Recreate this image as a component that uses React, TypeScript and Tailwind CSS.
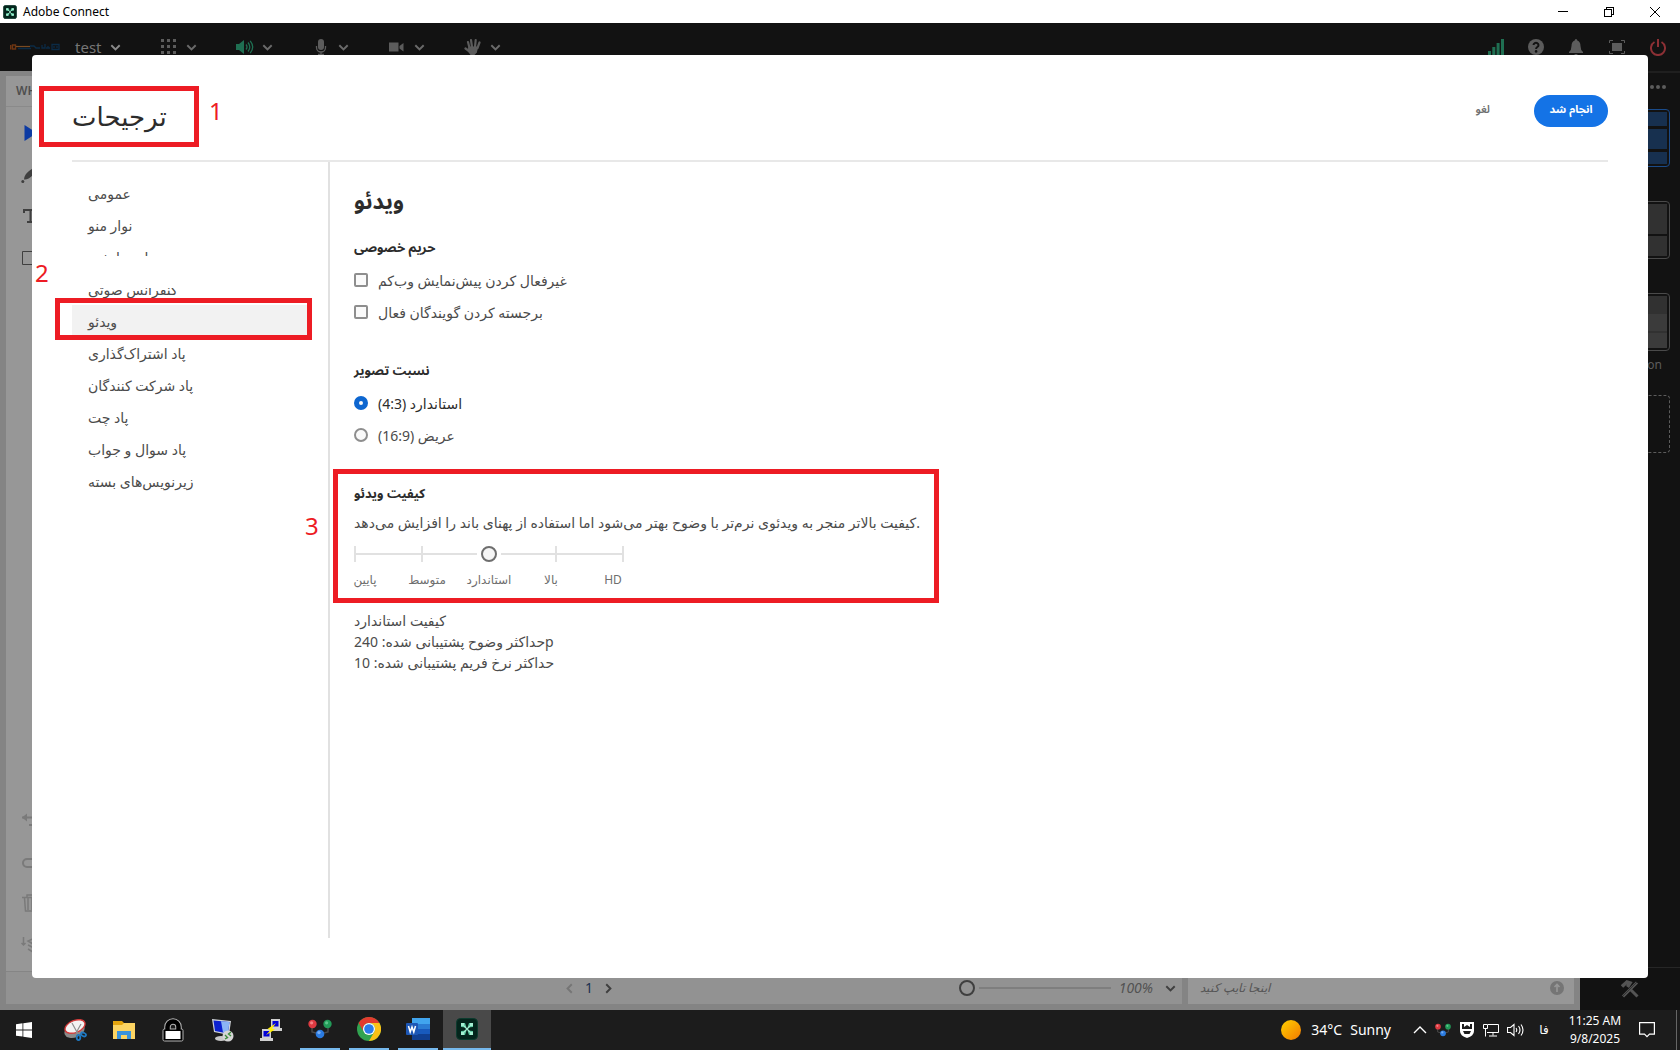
import type { ReactNode } from 'react';
import { clsx } from 'clsx';

const navItems = [
  'عمومی',
  'نوار منو',
  'نام نمایشی',
  'کنفرانس صوتی',
  'ویدئو',
  'پاد اشتراک‌گذاری',
  'پاد شرکت کنندگان',
  'پاد چت',
  'پاد سوال و جواب',
  'زیرنویس‌های بسته',
];

const Chevron = ({ className = '' }) => (
  <svg viewBox="0 0 12 8" className={clsx('h-[7px] w-[11px]', className)} fill="none" stroke="currentColor" strokeWidth="2.2">
    <path d="M1.2 1.4 6 6.2l4.8-4.8" />
  </svg>
);

const ConnectIcon = ({ className = '' }) => (
  <svg viewBox="0 0 22 22" className={className}>
    <rect x="0.5" y="0.5" width="21" height="21" rx="4" fill="#04251c" stroke="#0c3b2e" />
    <path d="M5 5h4l1.500 4.500L5 9zM17 5h-4l-1.500 4.500L17 9zM5 17h4l1.500-4.500L5 13zM17 17h-4l-1.500-4.500L17 13z" fill="#5fc9a2" />
    <path d="M5 5h3v3H5zM14 5h3v3h-3zM5 14h3v3H5zM14 14h3v3h-3z" fill="#a5f0d3" />
    <path d="m8 8 6 6M14 8l-6 6" stroke="#a5f0d3" strokeWidth="1.2" />
  </svg>
);

const Molecule = ({ className = '' }) => (
  <svg viewBox="0 0 24 20" className={className}>
    <path d="M4 8v5l8 2 8-2V8" fill="none" stroke="#4a4a4a" strokeWidth="1.4" />
    <circle cx="4.5" cy="5" r="4.2" fill="#dd3a41" />
    <circle cx="19.5" cy="5" r="4.2" fill="#229a58" />
    <circle cx="12" cy="15" r="4.3" fill="#2b7be0" />
    <circle cx="3.6" cy="3.8" r="1.6" fill="#f58084" />
    <circle cx="18.6" cy="3.8" r="1.6" fill="#5cc48a" />
    <circle cx="11" cy="13.6" r="1.7" fill="#76adf2" />
  </svg>
);

const TitleBar = () => (
  <div className="flex h-[23px] items-center bg-white pl-[3px] text-xs text-black">
    <ConnectIcon className="h-[14px] w-[14px]" />
    <span className="ml-[6px]">Adobe Connect</span>
    <div className="ml-auto flex items-center">
      <button aria-label="Minimize" className="flex h-5 w-[46px] items-center justify-center">
        <svg viewBox="0 0 10 10" className="h-[10px] w-[10px]" stroke="#000" shapeRendering="crispEdges">
          <path d="M0 4.5h10" />
        </svg>
      </button>
      <button aria-label="Restore" className="flex h-5 w-[46px] items-center justify-center">
        <svg viewBox="0 0 10 10" className="h-[10px] w-[10px]" fill="none" stroke="#000" shapeRendering="crispEdges">
          <path d="M.5 2.5h7v7h-7zM2.5 2V.5h7v7H8" />
        </svg>
      </button>
      <button aria-label="Close" className="mr-[2px] flex h-5 w-[46px] items-center justify-center">
        <svg viewBox="0 0 10 10" className="h-[10px] w-[10px]" stroke="#000">
          <path d="m0 0 10 10M10 0 0 10" />
        </svg>
      </button>
    </div>
  </div>
);

const ToolButton = ({ label, children }: { label: string; children: ReactNode }) => (
  <button aria-label={label} className="ml-10 flex items-center gap-[9px] text-[#5c5c5c]">
    <span className="flex w-4 justify-center">{children}</span>
    <Chevron className="text-[#6a6a6a]" />
  </button>
);

const MeetingBar = () => (
  <header className="flex h-12 items-center bg-[#121212] pr-[14px] pl-[10px]">
    <svg viewBox="0 0 50 8" className="h-2 w-[50px]" fill="none">
      <path d="M.7 2v4.500M2.500 2h3v4h-3z" stroke="#6e3512" strokeWidth="1.4" />
      <path d="M6 3.500h14" stroke="#7a4a20" strokeWidth="1.2" />
      <path d="M8 5.500h13M20 3h4l2 2h4M32 2v3h3V1m3 4V3m2 2h-4M42 1.500h7v5h-7zM44 3v2m3-2v2" stroke="#0b2b46" strokeWidth="1.300" />
    </svg>
    <button className="ml-[15px] flex items-center gap-[9px] text-[15px] text-[#767676]">
      test
      <Chevron className="text-[#8a8a8a]" />
    </button>
    <ToolButton label="Pods">
      <svg viewBox="0 0 16 16" className="h-4 w-4 shrink-0" fill="currentColor">
        {[0, 6, 12].map((y) => [0, 6, 12].map((x) => <rect key={`${x}-${y}`} x={x} y={y} width="3" height="3" />))}
      </svg>
    </ToolButton>
    <ToolButton label="Speaker">
      <svg viewBox="0 0 18 16" className="h-4 w-[18px] shrink-0" fill="none" stroke="#1f6f52" strokeWidth="1.3">
        <path d="M0 5h3l5-4v14l-5-4H0z" fill="#1f6f52" stroke="none" />
        <path d="M10 5.5q2 2.5 0 5M12 3.5q3.6 4.5 0 9M14.2 1.8q5 6.2 0 12.4" />
      </svg>
    </ToolButton>
    <ToolButton label="Microphone">
      <svg viewBox="0 0 12 16" className="h-4 w-3 shrink-0" fill="none" stroke="currentColor" strokeWidth="1.3">
        <rect x="3" y="0" width="6" height="11" rx="3" fill="currentColor" stroke="none" />
        <path d="M1.5 7v1.5a4.5 4.5 0 0 0 9 0V7M6 13v2.5M3 15.5h6" />
      </svg>
    </ToolButton>
    <ToolButton label="Camera">
      <svg viewBox="0 0 16 12" className="h-3 w-4 shrink-0" fill="currentColor">
        <path d="M0 1.5h9.5v9H0zM10.500 5l4-3v8.500l-4-3z" />
      </svg>
    </ToolButton>
    <ToolButton label="Raise hand">
      <svg viewBox="0 0 18 18" className="h-[18px] w-[18px] shrink-0" fill="none" stroke="currentColor" strokeWidth="2.2" strokeLinecap="round">
        <path d="M5.500 10 4 4M8 9 7 2M11 9l.7-7M13.500 10l2-5.500M5 13l-3.500-2.500" />
        <path d="M4.500 8.500h9.800l-1.500 6L10.500 17h-4l-3-4z" fill="currentColor" stroke="none" />
      </svg>
    </ToolButton>

    <div className="ml-auto flex items-center gap-6">
      <svg viewBox="0 0 16 16" className="h-4 w-4" fill="#1f6f52">
        <path d="M0 12h3v4H0zM4.300 8h3v8h-3zM8.600 4h3v12h-3zM13 0h3v16h-3z" />
      </svg>
      <button aria-label="Help">
        <svg viewBox="0 0 16 16" className="h-4 w-4">
          <circle cx="8" cy="8" r="8" fill="#5c5c5c" />
          <path d="M5.500 6a2.500 2.300 0 1 1 3.800 2Q8.100 8.800 8.100 10" fill="none" stroke="#121212" strokeWidth="2" />
          <circle cx="8.100" cy="12.400" r="1.300" fill="#121212" />
        </svg>
      </button>
      <button aria-label="Notifications">
        <svg viewBox="0 0 16 16" className="h-4 w-4" fill="#5c5c5c">
          <path d="M8 0q1.300 0 1.300 1.500Q12.500 2.500 12.500 7q0 4 2.500 6v1H1v-1q2.500-2 2.500-6 0-4.500 3.200-5.500Q6.700 0 8 0zM6 15h4q-2 2-4 0z" />
        </svg>
      </button>
      <button aria-label="Full screen">
        <svg viewBox="0 0 16 16" className="h-4 w-[18px]" fill="none" stroke="#5c5c5c">
          <path d="M.5 4V1.500H4M12 1.500h3.500V4M15.500 12v2.500H12M4 14.500H.5V12" />
          <path d="M3 4h10v8H3z" fill="#5c5c5c" stroke="none" />
        </svg>
      </button>
      <button aria-label="Leave meeting">
        <svg viewBox="0 0 16 17" className="h-[17px] w-4" fill="none" stroke="#8c3035" strokeWidth="2">
          <path d="M4.500 3a7 7 0 1 0 7 0M8 0v8" />
        </svg>
      </button>
    </div>
  </header>
);

const DrawingTools = () => (
  <div className="flex flex-1 flex-col text-[#3f3f3f]">
    <div className="flex flex-col gap-6 pt-[17px] pl-[15px]">
      <svg viewBox="0 0 18 18" className="h-[18px] w-[18px]">
        <path d="M3.500 1v16L16 9z" fill="#0d3ba3" />
      </svg>
      <svg viewBox="0 0 18 18" className="h-[18px] w-[18px]" fill="currentColor">
        <path d="M3 13.500q0-4.500 5-8.500L15 0l3 3-6 6q-5 5-9 4.500z" />
        <circle cx="1.800" cy="15.500" r="1.500" />
      </svg>
      <svg viewBox="0 0 18 18" className="h-[18px] w-[18px]" fill="currentColor">
        <path d="M2 1h15v5h-2V3h-4.500v10H13v2H6v-2h2.500V3H4v2H2z" />
      </svg>
      <svg viewBox="0 0 18 18" className="h-[18px] w-[18px]" fill="none" stroke="currentColor">
        <path d="M1.500 1.500h16v13h-16z" />
      </svg>
    </div>
    <div className="mt-auto flex flex-col gap-6 pb-[17px] pl-[15px] text-[#7a7a7a]">
      <svg viewBox="0 0 18 18" className="h-[18px] w-[18px]" fill="none" stroke="currentColor" strokeWidth="2">
        <path d="M1 7.500h13a3.500 3.500 0 0 1 0 7.500H8" />
        <path d="M6 3.500v8l-5-4z" fill="currentColor" stroke="none" />
      </svg>
      <svg viewBox="0 0 18 18" className="h-[18px] w-[18px]" fill="none" stroke="currentColor" strokeWidth="2">
        <path d="M18 7H6a4 4 0 0 0 0 8h6" />
      </svg>
      <svg viewBox="0 0 18 18" className="h-[18px] w-[18px]" fill="none" stroke="currentColor" strokeWidth="1.500">
        <path d="M1 3.500h16M6 3V1h6v2M3.500 4l1 13h9l1-13M7 4v12M11 4v12" />
      </svg>
      <svg viewBox="0 0 18 18" className="h-[18px] w-[18px]" fill="none" stroke="currentColor" strokeWidth="1.500">
        <path d="M2.500 1v8M.5 7l2 2 2-2M18 0 7 5l5 3M7 9l8 4M7 13l8 5" />
      </svg>
    </div>
  </div>
);

const Pods = () => (
  <main className="flex flex-1 gap-[6px] bg-[#848484] px-[6px] pt-[5px] pb-[6px]">
    <section className="flex flex-3 flex-col bg-[#979797]">
      <div className="flex h-[31px] items-center border-b border-[#8a8a8a] pl-[10px] text-xs font-semibold text-[#4e4e4e]">
        WHITEBOARD
      </div>
      <DrawingTools />
      <div className="grid h-[33px] grid-cols-[1fr_auto_1fr] items-center border-t border-[#858585] bg-[#929292] pr-[6px] text-[#3f3f3f]">
        <div className="col-start-2 flex items-center gap-[10px] pr-1 text-sm">
          <button aria-label="Previous page">
            <Chevron className="rotate-90 text-[#757575]" />
          </button>
          <span className="text-[#1c3050]">1</span>
          <button aria-label="Next page">
            <Chevron className="-rotate-90" />
          </button>
        </div>
        <div className="flex items-center justify-end">
          <input
            type="range"
            aria-label="Zoom"
            defaultValue={0}
            className="h-4 w-[152px] appearance-none bg-transparent bg-[linear-gradient(#7e7e7e,#7e7e7e)] bg-[length:132px_2px] bg-[position:right_center] bg-no-repeat [&::-webkit-slider-thumb]:h-4 [&::-webkit-slider-thumb]:w-4 [&::-webkit-slider-thumb]:appearance-none [&::-webkit-slider-thumb]:rounded-full [&::-webkit-slider-thumb]:border-2 [&::-webkit-slider-thumb]:border-[#3f3f3f]"
          />
          <button className="ml-2 flex items-center gap-3 text-sm text-[#525252] italic">
            100%
            <Chevron className="text-[#3f3f3f]" />
          </button>
        </div>
      </div>
    </section>
    <section className="flex w-[386px] flex-col bg-[#979797]">
      <div className="mt-auto flex h-[33px] items-center pr-[10px] pl-3">
        <input
          aria-label="Chat message"
          placeholder="اینجا تایپ کنید"
          className="min-w-0 flex-1 bg-transparent text-xs italic outline-none placeholder:text-[#555]"
        />
        <button aria-label="Send">
          <svg viewBox="0 0 14 14" className="h-[14px] w-[14px]">
            <circle cx="7" cy="7" r="7" fill="#757575" />
            <path d="M7 11V4M4.500 6 7 3.500 9.500 6" fill="none" stroke="#979797" strokeWidth="1.600" />
          </svg>
        </button>
      </div>
    </section>
  </main>
);

const LayoutThumb = ({ blocks, className }: { blocks: string[]; className: string }) => (
  <button aria-label="Layout" className={clsx('flex h-[58px] w-20 flex-col rounded border p-[2px]', className)}>
    {blocks.map((block, i) => (
      <span key={i} className={clsx('w-full', block)} />
    ))}
  </button>
);

const LayoutBar = () => (
  <aside className="flex w-[100px] flex-col items-end border-t-2 border-[#1f1f1f] bg-[#121212]">
    <svg viewBox="0 0 16 4" className="mt-3 mr-[14px] h-1 w-4" fill="#5c5c5c">
      <circle cx="2" cy="2" r="2" />
      <circle cx="8" cy="2" r="2" />
      <circle cx="14" cy="2" r="2" />
    </svg>
    <div className="mt-5 flex flex-col gap-[34px] pr-[10px]">
      <LayoutThumb className="gap-[3px] border-[#1a4b8a]" blocks={['h-[14px] bg-[#17304f]', 'h-5 bg-[#17304f]', 'flex-1 bg-[#17304f]']} />
      <LayoutThumb className="gap-[2px] border-[#4a4a4a]" blocks={['h-[30px] bg-[#313131]', 'flex-1 bg-[#313131]']} />
      <LayoutThumb
        className="border-[#4a4a4a]"
        blocks={['h-[18px] bg-[#313131]', 'h-[17px] bg-[#3b3b3b]', 'h-[2px] bg-[#313131]', 'flex-1 bg-[#3b3b3b]']}
      />
    </div>
    <span className="mt-[6px] pr-[18px] text-xs text-[#5c5c5c]">Collaboration</span>
    <button aria-label="New layout" className="mt-[22px] mr-[10px] h-[58px] w-20 rounded border border-dashed border-[#5c5c5c]" />
    <div className="mt-auto flex h-[43px] w-full items-center justify-center border-t border-[#262626]">
      <svg viewBox="0 0 18 18" className="h-[18px] w-[18px]" fill="none" stroke="#545454" strokeWidth="3">
        <path d="m2 16.500 14-14M10 10l6.500 6.500" />
        <path d="M1 6.500 6 2l3 1-2.500 4" strokeWidth="3.500" />
        <path d="M1 17 17 1" stroke="#121212" strokeWidth=".5" />
      </svg>
    </div>
  </aside>
);

const SideNav = () => (
  <nav className="w-[258px] border-r-2 border-[#e1e1e1] pt-[15px]">
    <ul>
      {navItems.map((item) => (
        <li key={item} className="relative">
          <a
            href="#"
            className={clsx('flex h-8 items-center pt-[2px] pl-4 text-sm text-[#4b4b4b]', item === 'ویدئو' && 'mr-[17px] bg-[#f2f2f2]')}
          >
            {item}
          </a>
          {item === 'کنفرانس صوتی' && (
            <span className="absolute -top-[17px] -left-10 z-10 flex h-8 w-[270px] items-center bg-white pt-[2px] pl-[3px] text-2xl text-[#ed1c24]">
              2
            </span>
          )}
          {item === 'ویدئو' && (
            <span className="absolute -top-[7px] -left-[17px] h-[42px] w-[257px] border-5 border-[#ed1c24]" />
          )}
        </li>
      ))}
    </ul>
  </nav>
);

const Option = ({ type, label, checked = false }: { type: 'checkbox' | 'radio'; label: string; checked?: boolean }) => (
  <label className={clsx('flex h-8 items-center gap-[10px] text-sm', checked ? 'text-[#2c2c2c]' : 'text-[#4b4b4b]')}>
    <input
      type={type}
      name={type === 'radio' ? 'aspect' : undefined}
      defaultChecked={checked}
      className={clsx(
        'h-[14px] w-[14px] appearance-none border-2 border-[#8e8e8e] bg-[#fafafa]',
        type === 'radio' ? 'rounded-full checked:border-5 checked:border-[#0d66d0]' : 'rounded-xs',
      )}
    />
    <span className="pt-[2px]">{label}</span>
  </label>
);

const SectionTitle = ({ children }: { children: ReactNode }) => (
  <h3 className="font-['Noto_Sans','Noto_Sans_Arabic',sans-serif] text-[13px] leading-5 font-bold text-[#2c2c2c]">{children}</h3>
);

const VideoSettings = () => (
  <div className="flex-1 pt-[22px] pl-6 text-sm text-[#4b4b4b]">
    <h2 className="font-['Noto_Sans','Noto_Sans_Arabic',sans-serif] text-[22px] leading-8 font-bold text-[#2c2c2c]">ویدئو</h2>
    <div className="mt-[21px]">
      <SectionTitle>حریم خصوصی</SectionTitle>
      <div className="mt-[7px]">
        <Option type="checkbox" label="غیرفعال کردن پیش‌نمایش وب‌کم" />
        <Option type="checkbox" label="برجسته کردن گویندگان فعال" />
      </div>
    </div>
    <div className="mt-8">
      <SectionTitle>نسبت تصویر</SectionTitle>
      <div className="mt-[7px]">
        <Option type="radio" label="استاندارد (4:3)" checked />
        <Option type="radio" label="عریض (16:9)" />
      </div>
    </div>
    <div className="relative mt-8">
      <span className="pointer-events-none absolute -top-[14px] -left-[21px] h-[134px] w-[606px] border-5 border-[#ed1c24]" />
      <span className="absolute top-[27px] -left-[49px] text-2xl text-[#ed1c24]">3</span>
      <SectionTitle>کیفیت ویدئو</SectionTitle>
      <p className="mt-[10px] leading-5">کیفیت بالاتر منجر به ویدئوی نرم‌تر با وضوح بهتر می‌شود اما استفاده از پهنای باند را افزایش می‌دهد.</p>
      <div className="relative mt-[13px] flex h-4 w-[270px] items-center justify-between bg-[linear-gradient(#e1e1e1,#e1e1e1)] bg-[length:100%_2px] bg-center bg-no-repeat">
        {[0, 1, 2, 3, 4].map((tick) => (
          <span key={tick} className="h-4 w-[2px] bg-[#e1e1e1]" />
        ))}
        <input
          type="range"
          min={0}
          max={4}
          defaultValue={2}
          aria-label="کیفیت ویدئو"
          className="absolute inset-0 w-full appearance-none bg-transparent [&::-webkit-slider-thumb]:h-4 [&::-webkit-slider-thumb]:w-4 [&::-webkit-slider-thumb]:appearance-none [&::-webkit-slider-thumb]:rounded-full [&::-webkit-slider-thumb]:border-2 [&::-webkit-slider-thumb]:border-[#6e6e6e] [&::-webkit-slider-thumb]:bg-[#f5f5f5] [&::-webkit-slider-thumb]:shadow-[0_0_0_4px_#fff]"
        />
      </div>
      <div className="mt-2 -ml-5 grid w-[310px] grid-cols-5 text-center text-xs leading-5 text-[#6e6e6e]">
        <span>پایین</span>
        <span>متوسط</span>
        <span>استاندارد</span>
        <span>بالا</span>
        <span>HD</span>
      </div>
    </div>
    <div className="mt-5 leading-[21px]">
      <p>کیفیت استاندارد</p>
      <p>حداکثر وضوح پشتیبانی شده: 240p</p>
      <p>حداکثر نرخ فریم پشتیبانی شده: 10</p>
    </div>
  </div>
);

const PreferencesDialog = () => (
  <div role="dialog" aria-label="ترجیحات" className="absolute inset-x-8 top-[55px] bottom-[72px] flex flex-col rounded bg-white px-10 pb-10">
    <div className="flex h-[107px] items-start border-b-2 border-[#e8e8e8]">
      <div className="relative mt-[31px] flex h-[61px] items-center">
        <h1 className="text-[26px] text-[#2c2c2c]">ترجیحات</h1>
        <span className="absolute top-0 -left-[33px] h-[61px] w-40 border-5 border-[#ed1c24]" />
        <span className="absolute top-[9px] left-[137px] text-2xl text-[#ed1c24]">1</span>
      </div>
      <div className="mt-10 ml-auto flex gap-11 font-['Noto_Sans','Noto_Sans_Arabic',sans-serif] text-[11px]">
        <button className="h-8 pb-1 font-semibold text-[#6e6e6e]">لغو</button>
        <button className="h-8 w-[74px] rounded-full bg-[#1473e6] pb-1 font-bold text-white">انجام شد</button>
      </div>
    </div>
    <div className="flex flex-1">
      <SideNav />
      <VideoSettings />
    </div>
  </div>
);

const TaskButton = ({ label, open = false, active = false, children }: { label: string; open?: boolean; active?: boolean; children: ReactNode }) => (
  <button aria-label={label} className={clsx('flex h-10 w-12 flex-col items-center', active && 'bg-[#494949]')}>
    <span className="flex flex-1 items-center justify-center">{children}</span>
    {(open || active) && <span className={clsx('h-[2px] bg-[#76b9ed]', active ? 'w-12' : 'w-10')} />}
  </button>
);

const Taskbar = () => (
  <footer className="flex h-10 items-center bg-[#1c1c1c] text-white">
    <button aria-label="Start" className="mr-[3px] flex h-10 w-12 items-center justify-center">
      <svg viewBox="0 0 16 16" className="h-4 w-4" fill="#fff">
        <path d="M0 2.200 6.500 1.300v6.200H0zM7.300 1.200 16 0v7.500H7.300zM0 8.400h6.500v6.200L0 13.700zM7.300 8.400H16V16l-8.700-1.200z" />
      </svg>
    </button>
    <div className="flex gap-px">
      <TaskButton label="Snipping Tool">
        <svg viewBox="0 0 24 22" className="h-[22px] w-6">
          <ellipse cx="11.500" cy="11.500" rx="10.500" ry="7" transform="rotate(-22 11.500 11.500)" fill="#8a8a8a" />
          <ellipse cx="12" cy="7.500" rx="10.500" ry="6" transform="rotate(-22 12 7.500)" fill="#f3f3f3" stroke="#d33b3b" strokeWidth="1.400" />
          <path d="M9 4l6 11M18 5l-5 9" stroke="#8f8f8f" strokeWidth="1.200" />
          <g fill="none" stroke="#1e78c2" strokeWidth="1.800">
            <ellipse cx="15.500" cy="18.500" rx="1.800" ry="2.600" />
            <ellipse cx="20.500" cy="15.500" rx="2.600" ry="1.700" transform="rotate(25 20.500 15.500)" />
          </g>
        </svg>
      </TaskButton>
      <TaskButton label="File Explorer">
        <svg viewBox="0 0 22 18" className="h-[18px] w-[22px]">
          <path d="M0 0h9l2 2h11v16H0z" fill="#e5a50d" />
          <path d="M0 4h9l2-2h11v16H0z" fill="#fcd462" />
          <path d="M4 18v-8h14v8h-4v-4H8v4z" fill="#3a93dc" />
        </svg>
      </TaskButton>
      <TaskButton label="Lock">
        <svg viewBox="0 0 22 24" className="h-6 w-[22px]" fill="none">
          <path d="M5.500 12V9a5.500 5.500 0 0 1 11 0v3" stroke="#b5b5b5" strokeWidth="6.500" />
          <rect x="1" y="11" width="20" height="12" rx="1.500" fill="#000" stroke="#b5b5b5" />
          <path d="M5.500 13V9a5.500 5.500 0 0 1 11 0v4" stroke="#000" strokeWidth="4.500" />
          <path d="M3.500 13h15v8h-15z" fill="#fff" />
        </svg>
      </TaskButton>
      <TaskButton label="Remote Desktop">
        <svg viewBox="0 0 24 24" className="h-6 w-6">
          <path d="m2 1 19 2-2 14-15-3z" fill="#cfd3d8" />
          <path d="m3.500 2.500 16 1.500-1.700 11.500L5 13z" fill="#0c22cf" />
          <path d="m11 3.200 8.500.8-1.700 11.500L13 14.500z" fill="#8bb4f5" />
          <ellipse cx="11" cy="20.500" rx="6" ry="2.500" fill="#c9c9c9" />
          <circle cx="18" cy="18" r="5.500" fill="#d6d6d6" />
          <path d="m15 17 2.500 2.500L15 21M21 14l-2.500 2 2.500 2" fill="none" stroke="#3c8c3c" strokeWidth="1.400" />
        </svg>
      </TaskButton>
      <TaskButton label="PuTTY">
        <svg viewBox="0 0 24 24" className="h-6 w-6">
          <path d="M12 1h9v9h2v3H12zM3 11h9v9h2v3H1v-3h2z" fill="#d0d0d0" />
          <path d="M13.500 3h6v5.500h-6zM4.500 13h6v5.500h-6z" fill="#0000d8" />
          <path d="m17 5-8.500 6 3 1L7 17l9-5.500-3-1z" fill="#ffee00" />
        </svg>
      </TaskButton>
      <TaskButton label="Connections" open>
        <Molecule className="h-5 w-6" />
      </TaskButton>
      <TaskButton label="Google Chrome" open>
        <svg viewBox="0 0 24 24" className="h-6 w-6">
          <circle cx="12" cy="12" r="12" fill="#31a350" />
          <path d="M1.600 6A12 12 0 0 1 22.400 6H12a6 6 0 0 0-5.200 9z" fill="#e33b2e" />
          <path d="M22.400 6A12 12 0 0 1 12 24l5.200-9A6 6 0 0 0 12 6z" fill="#fbc116" />
          <circle cx="12" cy="12" r="6" fill="#fff" />
          <circle cx="12" cy="12" r="4.800" fill="#2b7cea" />
        </svg>
      </TaskButton>
      <TaskButton label="Word" open>
        <svg viewBox="0 0 24 22" className="h-[22px] w-6">
          <path d="M6 0h18v6H6z" fill="#41a5ee" />
          <path d="M6 6h18v5H6z" fill="#2b7cd3" />
          <path d="M6 11h18v5H6z" fill="#185abd" />
          <path d="M6 16h18v6H6z" fill="#103f91" />
          <rect y="5" width="12" height="12" rx="1" fill="#1d57b5" />
          <path d="m2.500 8 1.700 6L6 9l1.800 5 1.700-6" fill="none" stroke="#fff" strokeWidth="1.500" />
        </svg>
      </TaskButton>
      <TaskButton label="Adobe Connect" active>
        <ConnectIcon className="h-[22px] w-[22px]" />
      </TaskButton>
    </div>

    <div className="ml-auto flex h-10 items-center">
      <button className="flex items-center text-sm">
        <span className="mr-[10px] h-5 w-5 rounded-full bg-linear-to-br from-[#ffd000] to-[#f07800]" />
        34°C
        <span className="ml-2">Sunny</span>
      </button>
      <div className="ml-[22px] flex items-center gap-2">
        <svg viewBox="0 0 14 8" className="h-2 w-[14px]" fill="none" stroke="#fff" strokeWidth="1.400">
          <path d="m1 7 6-6 6 6" />
        </svg>
        <Molecule className="h-[14px] w-4" />
        <svg viewBox="0 0 16 16" className="h-4 w-4">
          <path d="M1 0h14v9q0 5-7 7-7-2-7-7z" fill="#fff" />
          <path d="M3 2h2v3l3-2 3 2V2h2v5H3zM4 9h8l-1.500 3h-5z" fill="#1c1c1c" />
        </svg>
        <svg viewBox="0 0 16 14" className="h-[14px] w-4" fill="none" stroke="#fff">
          <path d="M5 1.500h10.500v8H4M.5 1.500h4v4h-4zM2.500 5.500v8M10 9.500v3M6 13h8" />
        </svg>
        <svg viewBox="0 0 17 14" className="h-[14px] w-[17px]" fill="none" stroke="#fff" strokeWidth="1.100">
          <path d="M.5 4.500h3L7 1.500v11L3.500 9.500h-3zM9 5q1.500 2 0 4M11.500 3q3 4 0 8M14 1.500q4 5.500 0 11" />
        </svg>
      </div>
      <span className="ml-[13px] w-[14px] text-center text-xs">فا</span>
      <div className="ml-4 w-14 text-center text-xs leading-[18px] whitespace-nowrap">
        <p>11:25 AM</p>
        <p>9/8/2025</p>
      </div>
      <button aria-label="Action center" className="mr-[3px] ml-4 border-r border-[#666] py-3 pr-[21px]">
        <svg viewBox="0 0 16 16" className="h-4 w-4" fill="none" stroke="#fff" strokeWidth="1.200">
          <path d="M.6.6h14.800v11.500H10.500L8 14.600 5.500 12.100H.6z" />
        </svg>
      </button>
    </div>
  </footer>
);

export default function App() {
  return (
    <div className="relative flex min-h-screen flex-col overflow-hidden font-['Noto_Sans','DejaVu_Sans',sans-serif]">
      <TitleBar />
      <MeetingBar />
      <div className="flex flex-1">
        <Pods />
        <LayoutBar />
      </div>
      <Taskbar />
      <PreferencesDialog />
    </div>
  );
}
